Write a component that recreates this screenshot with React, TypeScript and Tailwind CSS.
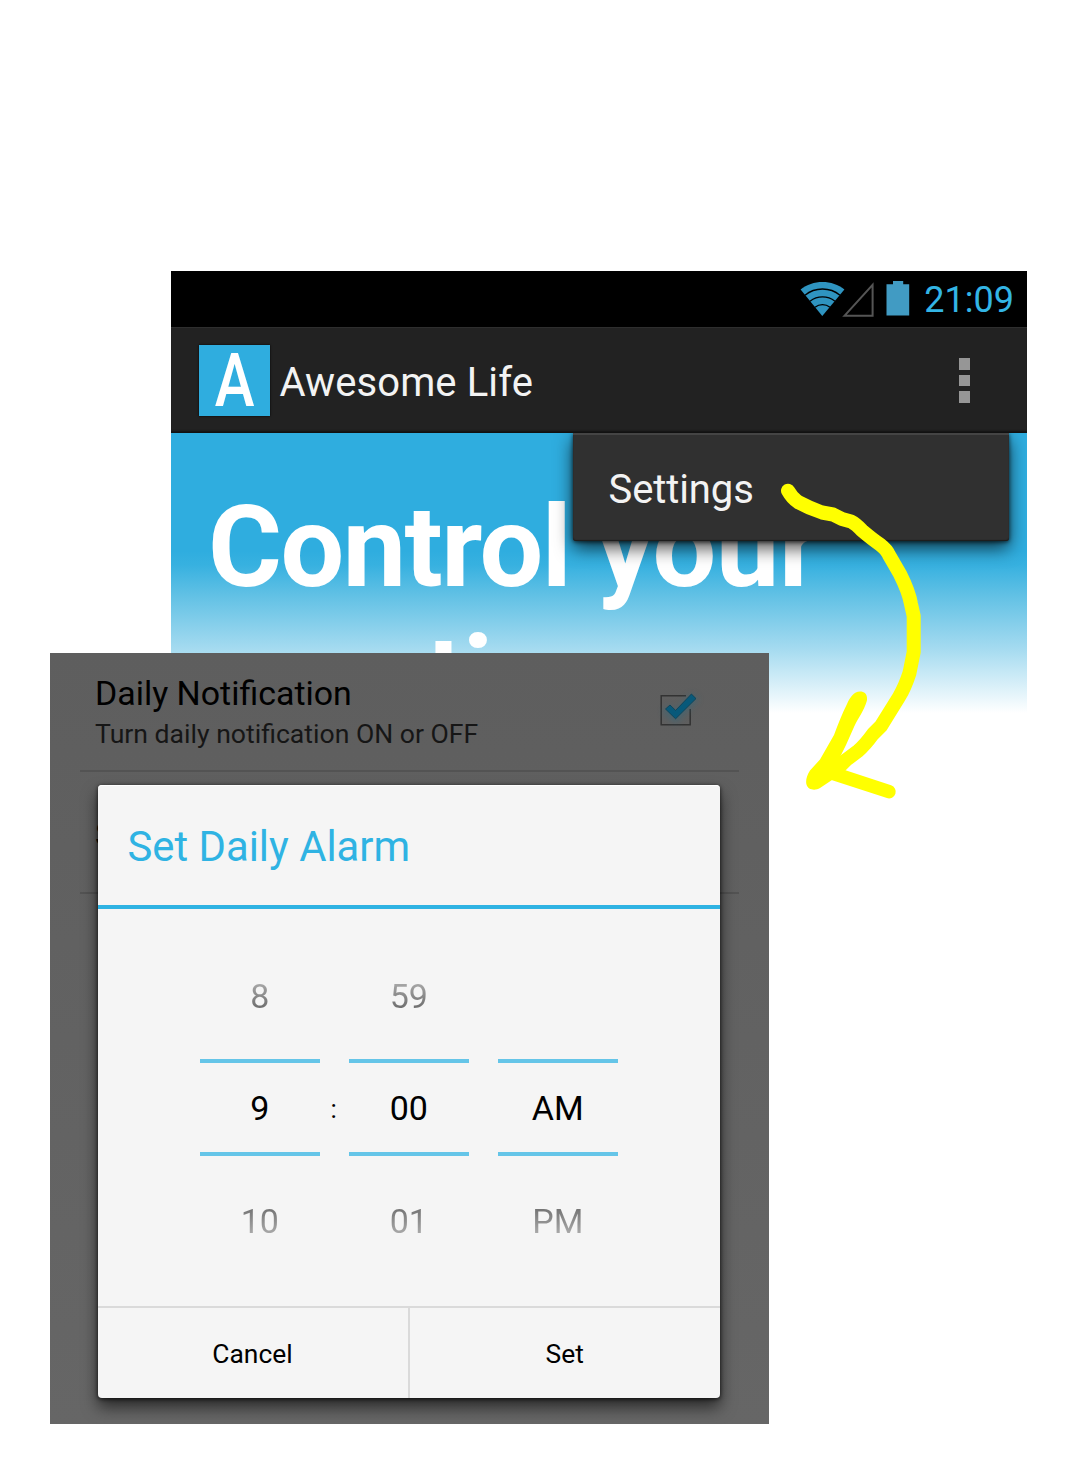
function WifiIcon() {
  return (
    <svg className="absolute left-[629px] top-[10px]" width="45" height="36" viewBox="0 0 45 36">
      <path d="M0.6 8.6C12.5 -1.6 32.5 -1.6 44.4 8.6L22.3 35Z" fill="#2f94c0" />
      <g fill="none" stroke="#000" strokeWidth="1.4">
        <path d="M5 14.2C15 5.9 30 5.9 40 14.2" />
        <path d="M10 20.2C17.5 14.4 27.5 14.4 35 20.2" />
        <path d="M15 26.2C19.5 22.8 25.5 22.8 30 26.2" />
      </g>
    </svg>
  );
}

function SignalIcon() {
  return (
    <svg className="absolute left-[670px] top-[9px]" width="35" height="38" viewBox="0 0 35 38">
      <path d="M3.4 35.8L31.6 4.8V35.8Z" fill="none" stroke="#555" strokeWidth="2" />
    </svg>
  );
}

function BatteryIcon() {
  return (
    <svg className="absolute left-[715px] top-[10px]" width="24" height="36" viewBox="0 0 24 36">
      <path d="M0.5 3.2H7V0H17.2V3.2H23.2V34.6H0.5Z" fill="#419bc3" />
    </svg>
  );
}

function StatusBar() {
  return (
    <div className="relative flex h-14 justify-end bg-black pr-[13px] pt-2">
      <WifiIcon />
      <SignalIcon />
      <BatteryIcon />
      <span className="text-[36px] leading-[42px] text-[#33b5e5]">21:09</span>
    </div>
  );
}

function ActionBar() {
  return (
    <div className="flex h-[106px] items-start border-t border-[#2e2e2e] bg-[#222] shadow-[inset_0_-3px_2px_-1px_#111]">
      <div className="ml-[27.5px] mt-[17px] flex h-[71px] w-[71.5px] justify-center bg-[#2faddf] shadow-[0_0_2px_#000]">
        <span className="scale-x-[0.81] text-[74px] font-medium leading-[71px] text-white">A</span>
      </div>
      <h1 className="ml-[9.5px] mt-[31px] text-[40px] leading-[47px] tracking-[0.1px] text-[#f3f3f3]">Awesome Life</h1>
      <div className="ml-auto mr-[57px] mt-[30px] flex flex-col gap-[5.2px]">
        <i className="block size-[11.5px] bg-[#969696]" />
        <i className="block size-[11.5px] bg-[#969696]" />
        <i className="block size-[11.5px] bg-[#969696]" />
      </div>
    </div>
  );
}

function OverflowMenu() {
  return (
    <div className="absolute left-[401.5px] top-0 h-[107.5px] w-[436.5px] rounded-b-[3px] border-t-2 border-[#444] bg-[#303030] pl-[36px] pt-[31px] shadow-[0_7px_18px_rgba(0,0,0,0.7),0_1px_4px_rgba(0,0,0,0.7),inset_0_-1px_1px_#1c1c1c]">
      <span className="text-[40px] leading-[47px] tracking-[-0.1px] text-[#f3f3f3]">Settings</span>
    </div>
  );
}

function AppScreen() {
  return (
    <section className="ml-[171px] h-[445px] w-[856px]">
      <StatusBar />
      <ActionBar />
      <div className="relative h-[283px] overflow-hidden bg-[linear-gradient(#2faddf_0px,#2faddf_118px,#37b1e0_132px,#62c1e5_163px,#a5dbf0_216px,#ffffff_280px)] pl-[37px] pt-[50px]">
        <p className="text-[113px] font-bold leading-[130px] tracking-[-1.5px] text-white">
          Control <span className="tracking-[-0.3px]">your</span>
          <br />
          emotions
        </p>
        <OverflowMenu />
      </div>
    </section>
  );
}

function CheckBox() {
  return (
    <svg className="absolute left-[605px] top-[34px] overflow-visible" width="46" height="44" viewBox="0 0 46 44">
      <path d="M31 8.7H6.2V37.8H35.2V22" fill="none" stroke="#333" strokeWidth="1.5" />
      <path d="M10.5 21.5L20.5 30L40 9.5" fill="none" stroke="#1b6f90" strokeOpacity="0.35" strokeWidth="9" className="blur-[3px]" />
      <path d="M10.5 22L15 18L20.6 23.4L36.4 7L41 11.6L20.6 31.8Z" fill="#08597a" stroke="#0b3f54" strokeWidth="0.8" />
    </svg>
  );
}

type Column = { before: string; value: string; after: string };

const columns: Column[] = [
  { before: "8", value: "9", after: "10" },
  { before: "59", value: "00", after: "01" },
  { before: "", value: "AM", after: "PM" },
];

function PickerColumn({ before, value, after }: Column) {
  return (
    <div className="flex w-[120px] flex-col items-center text-[34px] leading-10">
      <span className="h-10 bg-[linear-gradient(#a6a6a6_20%,#6c6c6c_82%)] bg-clip-text text-transparent">{before}</span>
      <i className="mt-[42.5px] h-1 w-full bg-[#65c5e8]" />
      <span className="mt-[25.5px] text-black">{value}</span>
      <i className="mt-6 h-1 w-full bg-[#65c5e8]" />
      <span className="mt-[44.5px] h-10 bg-[linear-gradient(#757575_20%,#aaaaaa_82%)] bg-clip-text text-transparent">{after}</span>
    </div>
  );
}

function TimeDialog() {
  return (
    <div className="absolute left-[47.5px] top-[132px] flex h-[613px] w-[622.5px] flex-col rounded-[4px] bg-[#f5f5f5] shadow-[0_9px_16px_rgba(0,0,0,0.6),0_1px_4px_rgba(0,0,0,0.75),inset_0_1px_0_#fff]">
      <h2 className="h-[120px] pl-[30px] pt-[37px] text-[41.8px] leading-[49px] text-[#2fb3e3]">Set Daily Alarm</h2>
      <div className="h-1 bg-[#2fb3e3]" />
      <div className="relative flex h-[397px] gap-[29px] pl-[102.3px] pt-[67px]">
        {columns.map((c) => (
          <PickerColumn key={c.value} {...c} />
        ))}
        <span className="absolute left-[233px] top-[184.5px] text-[26px] leading-[30px] text-black">:</span>
      </div>
      <div className="grid flex-1 grid-cols-[312px_1fr] border-t-2 border-[#dadada] text-center text-[26.4px] leading-[30px] text-black">
        <button className="flex items-start justify-center border-r-2 border-[#dadada] pt-[31px]">Cancel</button>
        <button className="flex items-start justify-center pt-[31px]">Set</button>
      </div>
    </div>
  );
}

function SettingsScreen() {
  return (
    <section className="relative -mt-[63px] ml-[50px] h-[771px] w-[719px] bg-[linear-gradient(#5e5e5e,#666666)] px-[30px]">
      <div className="relative h-[119px] border-b-2 border-[#535353] pl-[15px] pt-[21px]">
        <h3 className="text-[33.9px] leading-10 text-black">Daily Notification</h3>
        <p className="mt-[4px] text-[26.6px] leading-[31px] text-[#161616]">Turn daily notification ON or OFF</p>
      </div>
      <div className="h-[122px] border-b-2 border-[#535353] pl-[15px] pt-[42px]">
        <h3 className="text-[34px] leading-10 text-black">Set Daily Alarm</h3>
      </div>
      <CheckBox />
      <TimeDialog />
    </section>
  );
}

function HandDrawnArrow() {
  return (
    <svg className="pointer-events-none absolute left-0 top-0" width="1080" height="1466" viewBox="0 0 1080 1466">
      <g fill="none" stroke="#ffff00" strokeWidth="14" strokeLinecap="round" strokeLinejoin="round">
        <path d="M788 490.7Q792 498 798 502Q809 508 822 512.5L833 514.5L842 519L851 521.5Q856 524 862 530.5Q872 539 880 544.5Q887 550 889 555L900 574Q909 592 911 604L913.7 616V652L909.5 673Q905 687 899 697L881 726L873 734Q865 745 858 751L846 760L833 773" />
        <path d="M832 773L889 791.7" strokeWidth="13.5" />
      </g>
      <path
        d="M860 691.5C854 691.5 849.5 698 847 704C842 714 838 724 834 735L820 759.5L810 770.5C806.5 776 805.5 781 806.5 784.5C808 790 815 791 820 788L832 780L847 768L840 757L846 745L854 727C858 718 864 711 866.8 701C868 695 865 691.5 860 691.5Z"
        fill="#ffff00"
      />
    </svg>
  );
}

export default function App() {
  return (
    <main className="relative h-[1466px] w-[1080px] overflow-hidden bg-white pt-[271px] font-[Roboto,sans-serif]">
      <AppScreen />
      <SettingsScreen />
      <HandDrawnArrow />
    </main>
  );
}
